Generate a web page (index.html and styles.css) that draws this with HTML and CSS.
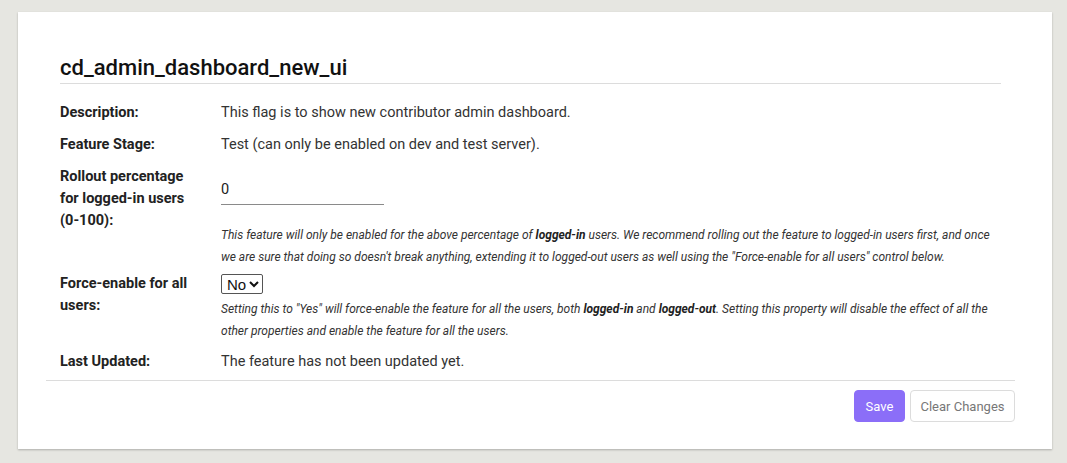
FILE: index.html
```html
<!DOCTYPE html>
<html lang="en">
<head>
<meta charset="utf-8">
<title>cd_admin_dashboard_new_ui</title>
<link rel="stylesheet" href="styles.css">
</head>
<body>
<div class="card">
  <div class="card-body">
    <h1 class="title">cd_admin_dashboard_new_ui</h1>
    <div class="rows">
      <div class="row">
        <div class="label">Description:</div>
        <div class="value">This flag is to show new contributor admin dashboard.</div>
      </div>
      <div class="row">
        <div class="label">Feature Stage:</div>
        <div class="value">Test (can only be enabled on dev and test server).</div>
      </div>
      <div class="row">
        <div class="label">Rollout percentage for logged-in users (0-100):</div>
        <div class="value">
          <input class="pct-input" type="text" value="0">
          <p class="help">This feature will only be enabled for the above percentage of <b>logged-in</b> users. We recommend rolling out the feature to logged-in users first, and once we are sure that doing so doesn't break anything, extending it to logged-out users as well using the "Force-enable for all users" control below.</p>
        </div>
      </div>
      <div class="row">
        <div class="label">Force-enable for all users:</div>
        <div class="value">
          <div class="select-wrap">
            <select class="yn-select">
              <option>No</option>
              <option>Yes</option>
            </select>
          </div>
          <p class="help help-force">Setting this to "Yes" will force-enable the feature for all the users, both <b>logged-in</b> and <b>logged-out</b>. Setting this property will disable the effect of all the other properties and enable the feature for all the users.</p>
        </div>
      </div>
      <div class="row">
        <div class="label">Last Updated:</div>
        <div class="value">The feature has not been updated yet.</div>
      </div>
    </div>
  </div>
  <div class="footer">
    <button class="btn btn-save" type="button">Save</button>
    <button class="btn btn-clear" type="button">Clear Changes</button>
  </div>
</div>
</body>
</html>
```

FILE: styles.css
```css
html, body {
  margin: 0;
  padding: 0;
}
body {
  background: #e6e6e1;
  font-family: Roboto, "Liberation Sans", Arial, sans-serif;
  color: #333;
  padding: 12px 15px 14px 18px;
}
.card {
  background: #fff;
  box-shadow: 0 1px 2px rgba(0, 0, 0, 0.25);
}
.card-body {
  padding: 41px 51px 0 42px;
}
.title {
  margin: 0;
  font-size: 22px;
  line-height: 30px;
  font-weight: 500;
  color: #111;
  border-bottom: 1px solid #dcdcdc;
}
.rows {
  margin-top: 13px;
  padding-bottom: 2px;
}
.row {
  display: grid;
  grid-template-columns: 161px 1fr;
  font-size: 14.5px;
  line-height: 22px;
}
.label {
  padding: 5px 25px 5px 0;
  font-weight: 700;
  color: #222;
}
.value {
  padding: 5px 0 0;
  color: #333;
}
.row:first-child .value,
.row:nth-child(2) .value,
.row:last-child .value {
  padding-bottom: 5px;
}
.pct-input {
  display: block;
  box-sizing: border-box;
  width: 163px;
  height: 30px;
  margin: 9px 0 0;
  padding: 0;
  border: 0;
  border-bottom: 1px solid #8a8a8a;
  font-family: Roboto, "Liberation Sans", Arial, sans-serif;
  font-size: 14.5px;
  color: #222;
  outline: none;
  background: transparent;
}
.help {
  max-width: 775px;
  margin: 19px 0 0;
  font-size: 12px;
  line-height: 22px;
  font-style: italic;
  color: #333;
}
.help b {
  color: #222;
}
.select-wrap {
  height: 22px;
}
.yn-select {
  display: block;
  margin-top: 1px;
  height: 20px;
  width: 42px;
  padding: 0 0 0 1px;
  font-family: "Liberation Sans", Arial, sans-serif;
  font-size: 15px;
  color: #111;
  border: 1px solid #555;
  border-radius: 2px;
  background: #fff;
}
.help-force {
  margin: 2px 0 4px;
}
.footer {
  margin: 0 37px 0 28px;
  border-top: 1px solid #dcdcdc;
  padding: 9px 0 27px;
  display: flex;
  justify-content: flex-end;
  gap: 5px;
}
.btn {
  height: 32px;
  border-radius: 4px;
  font-family: Roboto, "Liberation Sans", Arial, sans-serif;
  font-size: 13px;
  padding: 0 14px;
  cursor: pointer;
}
.btn-save {
  width: 51px;
  padding: 0;
  background: #8b6ef8;
  border: 1px solid #8b6ef8;
  color: #fff;
}
.btn-clear {
  width: 105px;
  padding: 0;
  background: #fff;
  border: 1px solid #dcdcdc;
  color: #777;
}
```
